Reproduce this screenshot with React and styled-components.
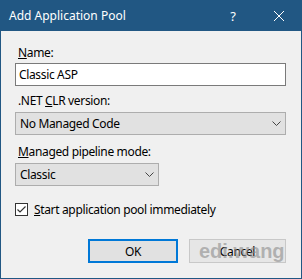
import React from "react";
import styled, { createGlobalStyle } from "styled-components";

const Global = createGlobalStyle`
  html, body { margin: 0; padding: 0; background: #f0f0f0; }
  body { font-family: "Segoe UI", "Noto Sans", "Liberation Sans", sans-serif; font-size: 12px; color: #000; }
`;

const Window = styled.div`
  position: relative;
  width: 302px;
  height: 279px;
  box-sizing: border-box;
  border: 1px solid #215783;
  border-top: none;
  background: #f0f0f0;
  display: flex;
  flex-direction: column;
`;

const TitleBar = styled.div`
  height: 31px;
  background: #215783;
  color: #fff;
  display: flex;
  align-items: center;
  padding-left: 9px;
  margin: 0 -1px;
  font-size: 12px;
`;

const Title = styled.div`
  flex: 1;
  padding-bottom: 1px;
`;

const TitleButton = styled.div`
  width: ${(p) => p.$w}px;
  height: 31px;
  display: flex;
  align-items: center;
  justify-content: center;
  font-size: 13px;
`;

const Body = styled.div`
  flex: 1;
  display: flex;
  flex-direction: column;
  padding: 14px 15px 15px 14px;
  letter-spacing: -0.35px;
`;

const Label = styled.div`
  line-height: 16px;
  padding-left: 3px;
  margin-top: ${(p) => p.$mt || 0}px;
  margin-bottom: ${(p) => p.$mb || 3}px;
`;

const TextBox = styled.div`
  height: 23px;
  box-sizing: border-box;
  border: 1px solid #7a7a7a;
  background: #fff;
  display: flex;
  align-items: center;
  padding-left: 3px;
`;

const Combo = styled.div`
  width: ${(p) => p.$w || "auto"};
  height: 23px;
  box-sizing: border-box;
  border: 1px solid #adadad;
  background: #e1e1e1;
  display: flex;
  align-items: center;
  justify-content: space-between;
  padding: 0 4px 0 4px;
`;

const CheckRow = styled.div`
  display: flex;
  align-items: center;
  gap: 6px;
  margin-top: 17px;
  height: 13px;
`;

const CheckBox = styled.div`
  width: 13px;
  height: 13px;
  box-sizing: border-box;
  border: 1px solid #333;
  background: #fff;
  display: flex;
  align-items: center;
  justify-content: center;
`;

const Buttons = styled.div`
  margin-top: auto;
  display: flex;
  justify-content: flex-end;
  gap: 11px;
`;

const Button = styled.div`
  width: ${(p) => p.$w}px;
  height: 24px;
  box-sizing: border-box;
  border: ${(p) => (p.$default ? "2px solid #0078d7" : "1px solid #c8c8c8")};
  background: ${(p) => (p.$default ? "#e1e1e1" : "#e6e6e6")};
  display: flex;
  align-items: center;
  justify-content: center;
  position: relative;
`;

const Watermark = styled.div`
  position: absolute;
  left: 198px;
  top: 239px;
  font-family: "Liberation Sans", Arial, sans-serif;
  font-weight: bold;
  font-size: 20px;
  line-height: 24px;
  color: rgba(140, 140, 140, 0.6);
  pointer-events: none;
`;

const Chevron = () => (
  <svg width="9" height="5" viewBox="0 0 9 5">
    <path d="M0.5 0.5 L4.5 4.5 L8.5 0.5" fill="none" stroke="#444" strokeWidth="1" />
  </svg>
);

export default function App() {
  return (
    <>
      <Global />
      <Window>
        <TitleBar>
          <Title>Add Application Pool</Title>
          <TitleButton $w={46}>?</TitleButton>
          <TitleButton $w={46}>
            <svg width="10" height="10" viewBox="0 0 10 10">
              <path d="M0 0 L10 10 M10 0 L0 10" stroke="#fff" strokeWidth="1" />
            </svg>
          </TitleButton>
        </TitleBar>
        <Body>
          <Label $mb={2}>
            <u>N</u>ame:
          </Label>
          <TextBox>Classic ASP</TextBox>
          <Label $mt={7}>
            .NET <u>C</u>LR version:
          </Label>
          <Combo>
            <span>No Managed Code</span>
            <Chevron />
          </Combo>
          <Label $mt={9}>
            <u>M</u>anaged pipeline mode:
          </Label>
          <Combo $w="144px">
            <span>Classic</span>
            <Chevron />
          </Combo>
          <CheckRow>
            <CheckBox>
              <svg width="11" height="11" viewBox="0 0 11 11">
                <path d="M1.5 5.5 L4 8 L9.5 2.5" fill="none" stroke="#333" strokeWidth="1.2" />
              </svg>
            </CheckBox>
            <span>
              <u>S</u>tart application pool immediately
            </span>
          </CheckRow>
          <Buttons>
            <Button $w={90} $default>OK</Button>
            <Button $w={97}>Cancel</Button>
          </Buttons>
        </Body>
        <Watermark>edi.wang</Watermark>
      </Window>
    </>
  );
}
